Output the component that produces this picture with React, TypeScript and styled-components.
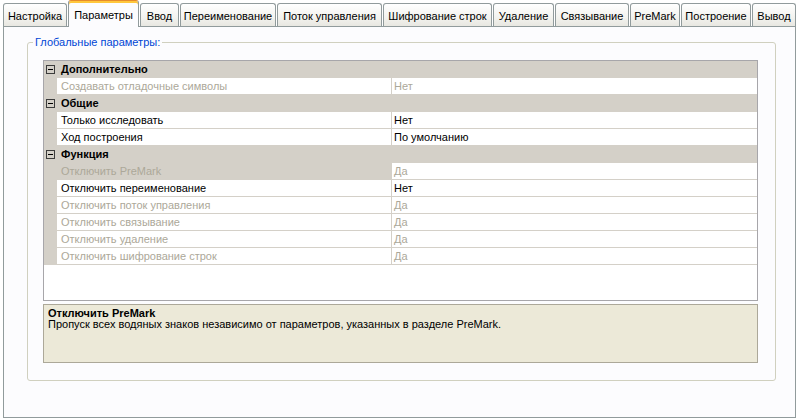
import React from 'react'
import styled, { createGlobalStyle } from 'styled-components'

const GlobalStyle = createGlobalStyle`
  html, body {
    margin: 0;
    padding: 0;
    background: #ffffff;
  }
  body {
    font-family: 'Liberation Sans', Arial, sans-serif;
    font-size: 11px;
    color: #000000;
  }
`

interface TabProps {
  $active?: boolean
  $width: number
}

interface CellProps {
  $disabled?: boolean
  $selected?: boolean
}

const Window = styled.div`
  width: 798px;
  height: 419px;
  box-sizing: border-box;
  padding: 0 2px 1px 3px;
  display: flex;
  flex-direction: column;
  background: #ffffff;
`

const TabStrip = styled.div`
  height: 26px;
  display: flex;
  align-items: flex-end;
  gap: 1px;
  flex-shrink: 0;
`

const Tab = styled.div<TabProps>`
  position: relative;
  box-sizing: border-box;
  flex-shrink: 0;
  width: ${(p) => p.$width}px;
  display: flex;
  align-items: center;
  justify-content: center;
  padding: 2px 0 0;
  line-height: 13px;
  white-space: nowrap;
  border: 1px solid #919b9c;
  border-bottom: none;
  border-radius: 3px 3px 0 0;
  height: ${(p) => (p.$active ? '27px' : '23px')};
  margin-bottom: ${(p) => (p.$active ? '-1px' : '0')};
  z-index: ${(p) => (p.$active ? 1 : 0)};
  background: ${(p) =>
    p.$active ? '#fcfcfe' : 'linear-gradient(#ffffff, #f3f3ef 60%, #e8e7e1)'};
  border-top-color: ${(p) => (p.$active ? '#e68b2c' : '#919b9c')};
  box-shadow: ${(p) => (p.$active ? 'inset 0 2px 0 #ffc73c' : 'none')};
`

const Panel = styled.div`
  flex: 1;
  box-sizing: border-box;
  border: 1px solid #919b9c;
  background: #fcfcfe;
  padding: 9px 19px 0 23px;
`

const GroupBox = styled.fieldset`
  box-sizing: border-box;
  margin: 0;
  height: 345px;
  min-width: 0;
  border: 1px solid #d0d0bf;
  border-radius: 3px;
  padding: 11px 17px 17px 15px;
  display: flex;
  flex-direction: column;
  gap: 3px;
`

const Legend = styled.legend`
  margin-left: -10px;
  padding: 0 2px;
  line-height: 13px;
  color: #0046d5;
`

const Grid = styled.div`
  height: 241px;
  box-sizing: border-box;
  border: 1px solid #a7a6aa;
  background: #ffffff;
  display: flex;
  flex-direction: column;
`

const CategoryRow = styled.div`
  height: 17px;
  display: flex;
  align-items: center;
  background: #d4d0c8;
  font-weight: bold;
  line-height: 17px;
`

const Gutter = styled.div`
  width: 13px;
  height: 100%;
  flex-shrink: 0;
  display: flex;
  align-items: center;
  justify-content: center;
  background: #d4d0c8;
`

const CategoryTitle = styled.div`
  padding-left: 4px;
`

const PropRow = styled.div`
  height: 17px;
  display: flex;
`

const LabelCell = styled.div<CellProps>`
  width: 335px;
  flex-shrink: 0;
  box-sizing: border-box;
  padding-left: 4px;
  line-height: 16px;
  border-right: 1px solid #d4d0c8;
  border-bottom: 1px solid #d4d0c8;
  white-space: nowrap;
  overflow: hidden;
  background: ${(p) => (p.$selected ? '#d4d0c8' : '#ffffff')};
  color: ${(p) => (p.$disabled ? '#aca899' : '#000000')};
`

const ValueCell = styled.div<CellProps>`
  flex: 1;
  box-sizing: border-box;
  padding-left: 2px;
  line-height: 16px;
  border-bottom: 1px solid #d4d0c8;
  white-space: nowrap;
  color: ${(p) => (p.$disabled ? '#aca899' : '#000000')};
`

const HelpBox = styled.div`
  height: 59px;
  box-sizing: border-box;
  border: 1px solid #aca899;
  background: #ece9d8;
  padding: 3px 4px;
`

const HelpTitle = styled.div`
  font-weight: bold;
  line-height: 11px;
`

const HelpText = styled.div`
  line-height: 11px;
`

const MinusBox: React.FC = () => (
  <svg width="9" height="9" viewBox="0 0 9 9">
    <rect x="0.5" y="0.5" width="8" height="8" fill="none" stroke="#3c3c3c" />
    <line x1="2" y1="4.5" x2="7" y2="4.5" stroke="#000000" />
  </svg>
)

const tabs: { label: string; width: number }[] = [
  { label: 'Настройка', width: 64 },
  { label: 'Параметры', width: 71 },
  { label: 'Ввод', width: 39 },
  { label: 'Переименование', width: 96 },
  { label: 'Поток управления', width: 105 },
  { label: 'Шифрование строк', width: 109 },
  { label: 'Удаление', width: 61 },
  { label: 'Связывание', width: 74 },
  { label: 'PreMark', width: 50 },
  { label: 'Построение', width: 70 },
  { label: 'Вывод', width: 44 },
]

interface Prop {
  label: string
  value: string
  disabled?: boolean
  selected?: boolean
}

const sections: { title: string; rows: Prop[] }[] = [
  {
    title: 'Дополнительно',
    rows: [{ label: 'Создавать отладочные символы', value: 'Нет', disabled: true }],
  },
  {
    title: 'Общие',
    rows: [
      { label: 'Только исследовать', value: 'Нет' },
      { label: 'Ход построения', value: 'По умолчанию' },
    ],
  },
  {
    title: 'Функция',
    rows: [
      { label: 'Отключить PreMark', value: 'Да', disabled: true, selected: true },
      { label: 'Отключить переименование', value: 'Нет' },
      { label: 'Отключить поток управления', value: 'Да', disabled: true },
      { label: 'Отключить связывание', value: 'Да', disabled: true },
      { label: 'Отключить удаление', value: 'Да', disabled: true },
      { label: 'Отключить шифрование строк', value: 'Да', disabled: true },
    ],
  },
]

const App: React.FC = () => {
  return (
    <Window>
      <GlobalStyle />
      <TabStrip>
        {tabs.map((t) => (
          <Tab key={t.label} $width={t.width} $active={t.label === 'Параметры'}>
            {t.label}
          </Tab>
        ))}
      </TabStrip>
      <Panel>
        <GroupBox>
          <Legend>Глобальные параметры:</Legend>
          <Grid>
            {sections.map((s) => (
              <React.Fragment key={s.title}>
                <CategoryRow>
                  <Gutter>
                    <MinusBox />
                  </Gutter>
                  <CategoryTitle>{s.title}</CategoryTitle>
                </CategoryRow>
                {s.rows.map((r) => (
                  <PropRow key={r.label}>
                    <Gutter />
                    <LabelCell $disabled={r.disabled} $selected={r.selected}>
                      {r.label}
                    </LabelCell>
                    <ValueCell $disabled={r.disabled}>{r.value}</ValueCell>
                  </PropRow>
                ))}
              </React.Fragment>
            ))}
          </Grid>
          <HelpBox>
            <HelpTitle>Отключить PreMark</HelpTitle>
            <HelpText>
              Пропуск всех водяных знаков независимо от параметров, указанных в разделе PreMark.
            </HelpText>
          </HelpBox>
        </GroupBox>
      </Panel>
    </Window>
  )
}

export default App
